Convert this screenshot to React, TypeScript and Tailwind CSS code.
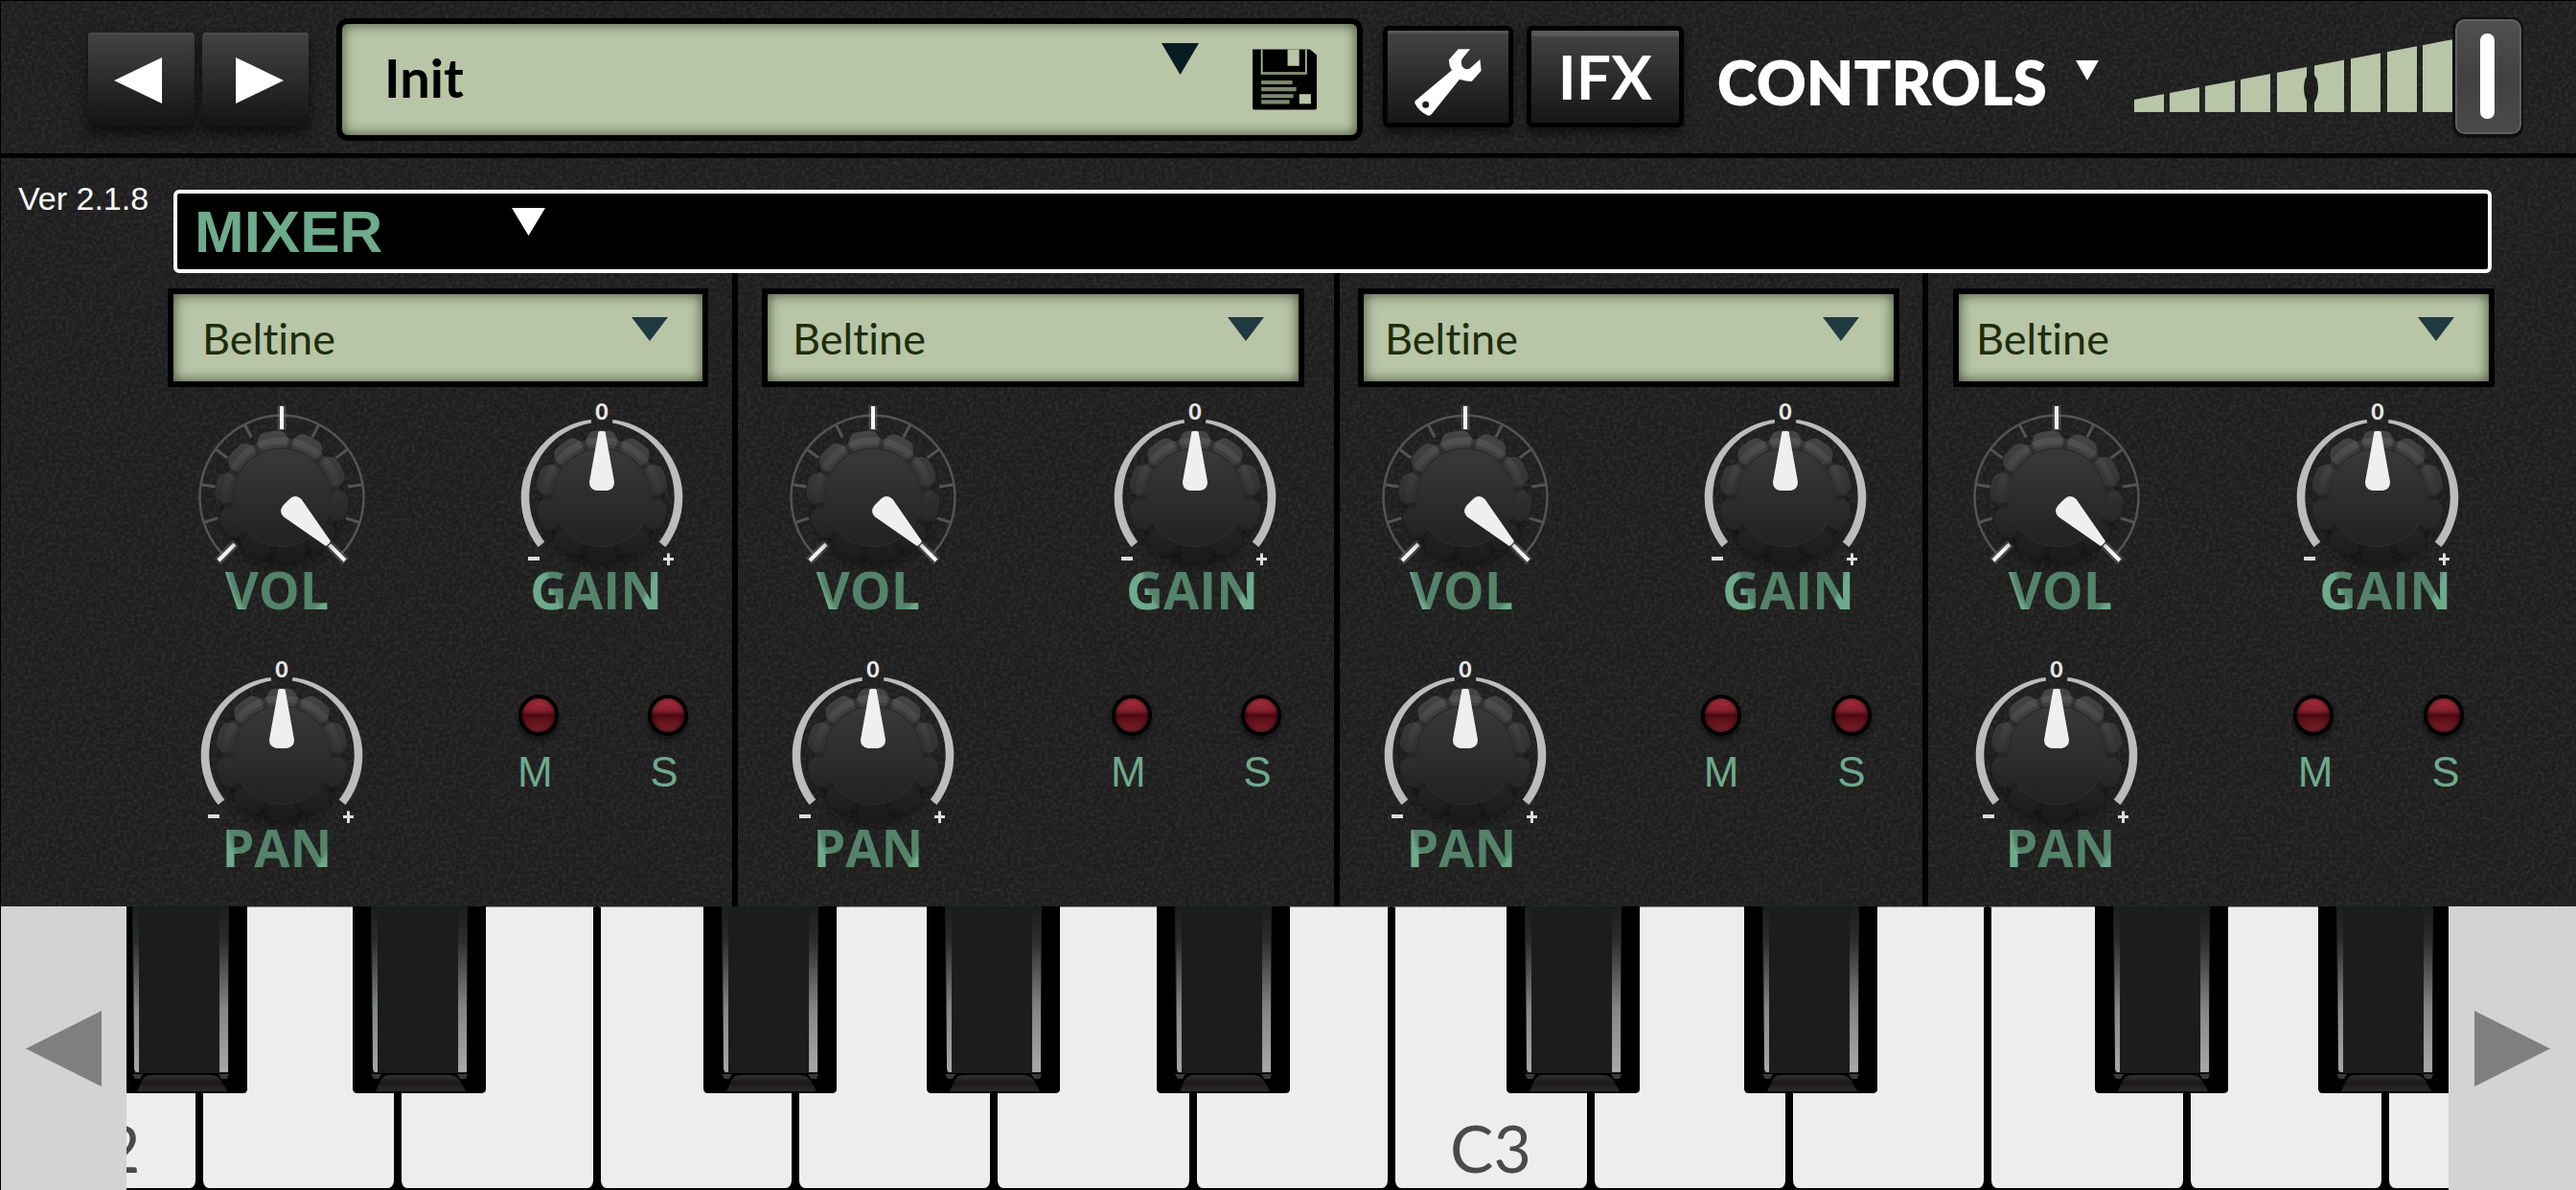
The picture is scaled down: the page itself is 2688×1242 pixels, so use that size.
import React, { useId } from "react";

const LOBE_PATH = (turn: number) => {
  const points: string[] = [];
  for (let i = 0; i < 240; i++) {
    const a = (i / 240) * Math.PI * 2;
    const dip = Math.pow((1 - Math.cos(10 * (a - turn))) / 2, 4);
    const r = 70 - 9 * dip;
    points.push(`${(Math.sin(a) * r).toFixed(1)},${(-Math.cos(a) * r).toFixed(1)}`);
  }
  return `M${points.join("L")}Z`;
};

function polar(r: number, deg: number) {
  const a = (deg * Math.PI) / 180;
  return [Math.sin(a) * r, -Math.cos(a) * r];
}

function taperedArc(from: number, to: number) {
  const outer: string[] = [];
  const inner: string[] = [];
  for (let i = 0; i <= 40; i++) {
    const d = from + ((to - from) * i) / 40;
    const half = 1.5 + 2.8 * Math.min(1, Math.abs(d) / 85);
    const [ox, oy] = polar(80 + half, d);
    const [ix, iy] = polar(80 - half, d);
    outer.push(`${ox.toFixed(1)},${oy.toFixed(1)}`);
    inner.unshift(`${ix.toFixed(1)},${iy.toFixed(1)}`);
  }
  return `M${outer.join("L")}L${inner.join("L")}Z`;
}

function Knob({ kind, label }: { kind: "level" | "bipolar"; label: string }) {
  const id = useId();
  const angle = kind === "level" ? 135 : 0;
  const grooves = Array.from({ length: 10 }, (_, i) => angle + 18 + i * 36);
  return (
    <div className="grid h-[168px] w-[190px]">
      <svg viewBox="-95 -100 190 168" className="col-start-1 row-start-1 h-full w-full overflow-visible" aria-hidden="true">
        <defs>
          <linearGradient id={`${id}l`} gradientUnits="userSpaceOnUse" x1="0" y1="-69" x2="0" y2="69">
            <stop offset="0" stopColor="#464646" />
            <stop offset="0.5" stopColor="#2f2f2f" />
            <stop offset="1" stopColor="#191919" />
          </linearGradient>
          <linearGradient id={`${id}h`} gradientUnits="userSpaceOnUse" x1="0" y1="-69" x2="0" y2="10">
            <stop offset="0" stopColor="#fff" stopOpacity="0.09" />
            <stop offset="1" stopColor="#fff" stopOpacity="0" />
          </linearGradient>
          <linearGradient id={`${id}d`} gradientUnits="userSpaceOnUse" x1="0" y1="-51" x2="0" y2="51">
            <stop offset="0" stopColor="#393939" />
            <stop offset="1" stopColor="#212121" />
          </linearGradient>
          <filter id={`${id}b`} x="-50%" y="-50%" width="200%" height="200%">
            <feGaussianBlur stdDeviation="7" />
          </filter>
          <filter id={`${id}s`} x="-20%" y="-20%" width="140%" height="140%">
            <feGaussianBlur stdDeviation="1.2" />
          </filter>
        </defs>
        {kind === "level" ? (
          <g fill="none" stroke="#545454" strokeWidth="3">
            <path d="M-59,62A85.5,85.5 0 1 1 59,62" strokeWidth="2.500" />
            {[-108, -81, -54, -27, 27, 54, 81, 108].map((d) => {
              const [x1, y1] = polar(85, d);
              const [x2, y2] = polar(70, d);
              return <path key={d} d={`M${x1},${y1}L${x2},${y2}`} />;
            })}
            <g stroke="#f4f4f4" strokeWidth="4">
              <path d="M0,-96V-70M-67,67L-48,48M67,67L48,48" stroke="#6a6a6a" strokeWidth="9" strokeOpacity="0.5" />
              <path d="M0,-95V-71M-66,66L-49,49M66,66L49,49" />
            </g>
          </g>
        ) : (
          <g fill="#bcbcbc">
            <path d={taperedArc(-128, -8)} />
            <path d={taperedArc(8, 128)} />
            <text x="0" y="-81" textAnchor="middle" fontSize="23" fontWeight="900" fontFamily="Lato, sans-serif" fill="#e6e6e6">0</text>
            <path d="M-77,62H-65V66H-77Z M64,63H75V66H64Z M68,58.500H71V71H68Z" fill="#dddddd" />
          </g>
        )}
        <ellipse cx="0" cy="14" rx="60" ry="60" fill="#000" fillOpacity="0.4" filter={`url(#${id}b)`} />
        <path d={LOBE_PATH((angle * Math.PI) / 180)} fill={`url(#${id}l)`} stroke="#141414" strokeOpacity="0.4" />
        <circle r="59" fill="none" stroke={`url(#${id}h)`} strokeWidth="7" />
        <g stroke="#101010" strokeOpacity="0.55" strokeWidth="4" filter={`url(#${id}s)`}>
          {grooves.map((d) => {
            const [x1, y1] = polar(51, d);
            const [x2, y2] = polar(63, d);
            return <path key={d} d={`M${x1},${y1}L${x2},${y2}`} />;
          })}
        </g>
        <circle r="51" fill={`url(#${id}d)`} stroke="#2b2b2b" strokeWidth="1.500" />
        <path
          d="M-2,-69H2Q4,-69 4,-66L13,-16Q13,-8 5,-7H-5Q-13,-8 -13,-16L-4,-66Q-4,-69 -2,-69Z"
          fill="#efefef"
          transform={`rotate(${angle})`}
        />
      </svg>
      <input
        type="range"
        aria-label={label}
        min={-100}
        max={100}
        defaultValue={kind === "level" ? 100 : 0}
        className="col-start-1 row-start-1 h-full w-full cursor-pointer opacity-0"
      />
    </div>
  );
}

function KnobLabel({ children }: { children: React.ReactNode }) {
  return (
    <span className="w-[190px] bg-[radial-gradient(ellipse_58px_68px_at_52%_0%,#54836b_92%,#6eaa8c_100%)] bg-clip-text text-center font-['Open_Sans',sans-serif] text-[54px] leading-[56px] font-bold text-transparent">
      {children}
    </span>
  );
}

function Led({ letter, name, nudge }: { letter: string; name: string; nudge: string }) {
  return (
    <label className="flex flex-col items-center">
      <input
        type="checkbox"
        aria-label={name}
        className="h-[43px] w-[42px] appearance-none rounded-full border-4 border-black bg-[linear-gradient(180deg,#a8303c_0%,#84202c_36%,#4c0814_50%,#5e1019_62%,#7c222b_100%)] shadow-[0_4px_5px_rgba(0,0,0,0.5),inset_0_0_5px_rgba(20,0,0,0.6)]"
      />
      <span className={`mt-[16px] font-['Liberation_Sans',sans-serif] text-[44px] leading-[44px] text-[#6eaa8c] ${nudge}`}>{letter}</span>
    </label>
  );
}

function Down({ className }: { className: string }) {
  return (
    <svg viewBox="0 0 40 40" preserveAspectRatio="none" className={className} aria-hidden="true">
      <path d="M0,0H40L20,40Z" fill="currentColor" />
    </svg>
  );
}

const channels = [
  { cell: "border-r-[6px]", lcd: "pl-[174px] pr-[25px]", text: "pl-[30px]", knobs: "pl-[198px] pr-[41px]", labels: "pl-[193px] pr-[47px]", led: "pr-[8px]" },
  { cell: "border-r-[6px]", lcd: "pl-[25px] pr-[31px]", text: "pl-[26px]", knobs: "pl-[46px] pr-[50px]", labels: "pl-[41px] pr-[53px]", led: "pr-[8px]" },
  { cell: "border-r-[6px]", lcd: "pl-[19px] pr-[24px]", text: "pl-[22px]", knobs: "pl-[36px] pr-[48px]", labels: "pl-[32px] pr-[45px]", led: "" },
  { cell: "", lcd: "pl-[26px] pr-[85px]", text: "pl-[18px]", knobs: "pl-[39px] pr-[112px]", labels: "pl-[43px] pr-[104px]", led: "pl-[4px]" },
];

function Channel({ index }: { index: number }) {
  const c = channels[index];
  const n = index + 1;
  return (
    <section aria-label={`Channel ${n}`} className={`flex flex-col border-black pt-[16px] ${c.cell}`}>
      <div className={c.lcd}>
        <div className="grid items-center">
          <select
            aria-label={`Channel ${n} instrument`}
            className={`col-start-1 row-start-1 h-[103px] w-full appearance-none border-[6px] border-black bg-[#b8c5a6] font-['Lato',sans-serif] text-[45px] leading-[56px] [font-variant-ligatures:none] text-[#1e2c0c] shadow-[inset_0_0_14px_rgba(20,28,10,0.75)] ${c.text}`}
          >
            <option>Beltine</option>
          </select>
          <Down className="pointer-events-none relative col-start-1 row-start-1 mr-[42px] mb-[18px] h-[25px] w-[38px] justify-self-end text-[#1f3a40]" />
        </div>
      </div>
      <div className={`mt-[15px] flex justify-between ${c.knobs}`}>
        <Knob kind="level" label={`Channel ${n} volume`} />
        <Knob kind="bipolar" label={`Channel ${n} gain`} />
      </div>
      <div className={`flex justify-between ${c.labels}`}>
        <KnobLabel>VOL</KnobLabel>
        <KnobLabel>GAIN</KnobLabel>
      </div>
      <div className={`mt-[45px] flex justify-between ${c.knobs}`}>
        <Knob kind="bipolar" label={`Channel ${n} pan`} />
        <div className="flex w-[190px] justify-between pt-[37px] pr-[5px] pl-[7px]">
          <Led letter="M" name={`Channel ${n} mute`} nudge={c.led} />
          <Led letter="S" name={`Channel ${n} solo`} nudge={c.led} />
        </div>
      </div>
      <div className={`flex ${c.labels}`}>
        <KnobLabel>PAN</KnobLabel>
      </div>
    </section>
  );
}

const whiteKeys = ["C2", "D2", "E2", "F2", "G2", "A2", "B2", "C3", "D3", "E3", "F3", "G3", "A3"];

const blackKeys = [
  { note: "C#2", place: "left-[-0.540%]" },
  { note: "D#2", place: "left-[9.720%]" },
  { note: "F#2", place: "left-[24.840%]" },
  { note: "G#2", place: "left-[34.460%]" },
  { note: "A#2", place: "left-[44.370%]" },
  { note: "C#3", place: "left-[59.430%]" },
  { note: "D#3", place: "left-[69.660%]" },
  { note: "F#3", place: "left-[84.770%]" },
  { note: "G#3", place: "left-[94.390%]" },
];

function BlackKey({ note, place }: { note: string; place: string }) {
  const id = useId();
  return (
    <button type="button" aria-label={note} className={`absolute top-0 h-[195px] w-[5.740%] ${place}`}>
      <svg viewBox="0 0 139 195" preserveAspectRatio="none" className="h-full w-full" aria-hidden="true">
        <defs>
          <linearGradient id={id} x1="0" y1="0" x2="0" y2="1">
            <stop offset="0" stopColor="#1b1d1c" />
            <stop offset="0.2" stopColor="#2c2c2c" />
            <stop offset="0.62" stopColor="#858585" />
            <stop offset="1" stopColor="#a8a8a8" />
          </linearGradient>
          <linearGradient id={`${id}c`} x1="0" y1="0" x2="0" y2="1">
            <stop offset="0" stopColor="#303030" />
            <stop offset="0.5" stopColor="#1b191a" />
            <stop offset="1" stopColor="#2b2b2b" />
          </linearGradient>
        </defs>
        <path d="M0,0H139V190Q139,195 134,195H5Q0,195 0,190Z" fill="#000" />
        <path d="M19,0H120V174H19Z" fill="#1b1d1c" />
        <path d="M19,40L21,174H19ZM120,40L119,174H120Z" fill="#000" />
        <path d="M20,0H26V173H23Q21,172 21,168Z" fill={`url(#${id})`} />
        <path d="M110,0H119V173H110Z" fill={`url(#${id})`} />
        <path d="M18,174H121V195H18Z" fill="#000" />
        <path d="M38,176H101Q108,176 112,182L118,193H24L29,182Q32,176 38,176Z" fill={`url(#${id}c)`} />
        <path d="M19,175H30L27,180H22ZM109,175H120L118,180H112Z" fill="#3a3a3a" />
      </svg>
    </button>
  );
}

function WhiteKey({ note, index }: { note: string; index: number }) {
  const last = index === whiteKeys.length - 1;
  const edge = index === 0 ? "rounded-br-[10px] border-r-[4px]" : last ? "rounded-bl-[10px] border-l-[4px]" : "rounded-b-[10px] border-x-[4px]";
  return (
    <button
      type="button"
      aria-label={note}
      className={`flex items-end justify-end overflow-hidden border-t border-b-[2px] border-black border-t-[#888] bg-[#ededed] ${edge}`}
    >
      {note.startsWith("C") && (
        <span className="w-[200px] shrink-0 pb-[10px] text-center font-['Lato',sans-serif] text-[68px] leading-[64px] text-[#4a4a4a]">
          {note}
        </span>
      )}
    </button>
  );
}

function Header() {
  return (
    <header className="flex h-[164px] items-start border-b-[5px] border-black pr-[58px] pl-[91px]">
      <div className="mt-[33px] flex gap-[8px]">
        <button type="button" aria-label="Previous preset" className="flex h-[98px] w-[111px] items-center justify-center rounded-[4px] border-t-2 border-[#4c4c4c] bg-linear-to-b from-[#434343] to-[#141414] shadow-[0_8px_14px_rgba(0,0,0,0.6)]">
          <svg viewBox="0 0 50 48" className="mr-[8px] h-[48px] w-[50px]" aria-hidden="true"><path d="M50,0V48L0,24Z" fill="#fff" /></svg>
        </button>
        <button type="button" aria-label="Next preset" className="flex h-[98px] w-[111px] items-center justify-center rounded-[4px] border-t-2 border-[#4c4c4c] bg-linear-to-b from-[#434343] to-[#141414] shadow-[0_8px_14px_rgba(0,0,0,0.6)]">
          <svg viewBox="0 0 50 48" className="ml-[8px] h-[48px] w-[50px]" aria-hidden="true"><path d="M0,0V48L50,24Z" fill="#fff" /></svg>
        </button>
      </div>
      <div className="mt-[18px] ml-[29px] grid flex-1">
        <select
          aria-label="Preset"
          className="col-start-1 row-start-1 h-[128px] w-full appearance-none rounded-[12px] border-[6px] border-black bg-[#b8c5a6] pr-[220px] pb-[4px] pl-[44px] font-['Lato',sans-serif] text-[56px] leading-[68px] font-bold text-black shadow-[inset_0_0_14px_rgba(20,28,10,0.75)]"
        >
          <option>Init</option>
        </select>
        <div className="pointer-events-none relative col-start-1 row-start-1 mt-[26px] mr-[48px] flex gap-[56px] justify-self-end">
          <Down className="h-[33px] w-[39px] text-[#071c20]" />
          <button type="button" aria-label="Save preset" className="pointer-events-auto mt-[6px] h-[64px] w-[67px]">
            <svg viewBox="0 0 66 62" className="h-full w-full" aria-hidden="true">
              <path d="M0,0H59L66,6V60Q66,62 64,62H2Q0,62 0,60Z" fill="#000" />
              <path d="M9.500,0V25H55V0" fill="none" stroke="#a9b598" strokeWidth="1.800" />
              <path d="M10,23H55V26H10Z" fill="#7d876f" />
              <path d="M36,0H48V17H36Z" fill="#b8c5a6" />
              <path d="M9,32H41V36H9ZM9,39H45V43H9ZM9,46H42V50H9ZM9,52H38V56H9Z" fill="#7d876f" />
              <path d="M48,46H60V56H48Z" fill="#b8c5a6" />
            </svg>
          </button>
        </div>
      </div>
      <div className="mt-[26px] ml-[21px] flex gap-[14px]">
        <button type="button" aria-label="Settings" className="flex h-[106px] w-[136px] items-center justify-center rounded-[6px] border-[5px] border-black bg-linear-to-b from-[#454545] to-[#161616] shadow-[0_6px_10px_rgba(0,0,0,0.5),inset_0_3px_1px_rgba(255,255,255,0.12)]">
          <svg viewBox="136 120 210 210" className="mt-[12px] h-[70px] w-[70px]" aria-hidden="true">
            <path
              fillRule="evenodd"
              d="M273,121H310L284,153Q279,172 290,180Q300,187 310,181L341,153L345,188L315,222Q296,222 277,215L190,324Q184,331 176,328Q150,315 137,290Q136,284 140,281L253,187Q243,172 244,154ZM171,284A10.500,10.500 0 1 0 171,305A10.500,10.500 0 1 0 171,284Z"
              fill="#fff"
            />
          </svg>
        </button>
        <button type="button" className="flex h-[106px] w-[164px] items-center justify-center rounded-[6px] border-[5px] border-black bg-linear-to-b from-[#454545] to-[#161616] font-['Lato',sans-serif] text-[64px] leading-[72px] font-bold text-white shadow-[0_6px_10px_rgba(0,0,0,0.5),inset_0_6px_1px_rgba(255,255,255,0.12)]">
          IFX
        </button>
      </div>
      <button type="button" className="mt-[49px] ml-[35px] flex items-start gap-[30px] font-['Lato',sans-serif] text-[64px] leading-[72px] font-extrabold text-white">
        CONTROLS
        <Down className="mt-[13px] h-[21px] w-[24px] text-white" />
      </button>
      <div className="mt-[19px] ml-[37px] grid h-[120px] w-[403px]">
        <svg viewBox="0 0 403 120" className="col-start-1 row-start-1 h-full w-full overflow-visible" aria-hidden="true">
          <defs>
            <clipPath id="wedge"><path d="M0,84L333,21V97H0Z" /></clipPath>
            <linearGradient id="thumb" x1="0" y1="0" x2="0" y2="1">
              <stop offset="0" stopColor="#505050" />
              <stop offset="0.5" stopColor="#414141" />
              <stop offset="1" stopColor="#4a4a4a" />
            </linearGradient>
          </defs>
          <g clipPath="url(#wedge)" fill="#b8c5a6">
            {[0, 37, 74, 111, 149, 188, 226, 264, 301].map((x) => (
              <rect key={x} x={x} y="0" width="31" height="97" />
            ))}
          </g>
          <path d="M184.500,54Q192,60 192,72Q192,84 184.500,91Q177,84 177,72Q177,60 184.500,54Z" fill="#1d1d1d" />
          <rect x="332" y="-2" width="74" height="126" rx="12" fill="#000" fillOpacity="0.55" />
          <rect x="336" y="1" width="67" height="118" rx="9" fill="url(#thumb)" stroke="#606060" strokeWidth="2" />
          <rect x="361" y="15" width="15" height="89" rx="7" fill="#fff" />
        </svg>
        <input type="range" aria-label="Master volume" defaultValue={100} className="col-start-1 row-start-1 h-full w-full cursor-pointer opacity-0" />
      </div>
    </header>
  );
}

export default function App() {
  return (
    <div className="relative isolate flex min-h-screen flex-col border-t border-l border-black bg-[#1e1e1e]">
      <svg className="pointer-events-none absolute inset-0 -z-10 h-full w-full" aria-hidden="true">
        <filter id="grain" x="0" y="0" width="100%" height="100%">
          <feTurbulence type="fractalNoise" baseFrequency="0.28" numOctaves="2" stitchTiles="stitch" />
          <feColorMatrix values="0 0 0 0 1  0 0 0 0 1  0 0 0 0 1  0.160 0 0 0 -0.060" />
        </filter>
        <rect width="100%" height="100%" filter="url(#grain)" />
      </svg>
      <Header />
      <main className="flex flex-1 flex-col">
        <div className="flex items-start pt-[22px] pr-[88px] pl-[18px]">
          <span className="w-[162px] shrink-0 font-['Liberation_Sans',sans-serif] text-[34px] leading-[40px] text-white">Ver 2.1.8</span>
          <div className="mt-[11px] grid flex-1">
            <select
              aria-label="Page"
              className="col-start-1 row-start-1 h-[87px] w-full appearance-none rounded-[6px] border-[4px] border-white bg-black pl-[18px] font-['Liberation_Sans',sans-serif] text-[62px] leading-[72px] font-bold text-[#6eaa8c]"
            >
              <option>MIXER</option>
            </select>
            <Down className="pointer-events-none relative col-start-1 row-start-1 mt-[19px] ml-[353px] h-[29px] w-[35px] text-white" />
          </div>
        </div>
        <div className="grid flex-1 grid-cols-[769fr_628fr_614fr_676fr]">
          {channels.map((_, i) => (
            <Channel key={i} index={i} />
          ))}
        </div>
      </main>
      <footer className="flex h-[296px]">
        <button type="button" aria-label="Scroll keyboard left" className="flex w-[131px] shrink-0 items-center bg-[#d3d3d3] pl-[26px]">
          <svg viewBox="0 0 80 80" className="h-[79px] w-[79px]" aria-hidden="true"><path d="M80,0V80L0,40Z" fill="#7f7f7f" /></svg>
        </button>
        <div className="relative flex-1 overflow-hidden bg-black">
          <div className="grid h-full grid-cols-[76fr_repeat(11,207fr)_66fr]">
            {whiteKeys.map((note, i) => (
              <WhiteKey key={note} note={note} index={i} />
            ))}
          </div>
          {blackKeys.map((k) => (
            <BlackKey key={k.note} {...k} />
          ))}
        </div>
        <button type="button" aria-label="Scroll keyboard right" className="flex w-[133px] shrink-0 items-center bg-[#d3d3d3] pl-[27px]">
          <svg viewBox="0 0 80 80" className="h-[79px] w-[79px]" aria-hidden="true"><path d="M0,0V80L80,40Z" fill="#7f7f7f" /></svg>
        </button>
      </footer>
    </div>
  );
}
